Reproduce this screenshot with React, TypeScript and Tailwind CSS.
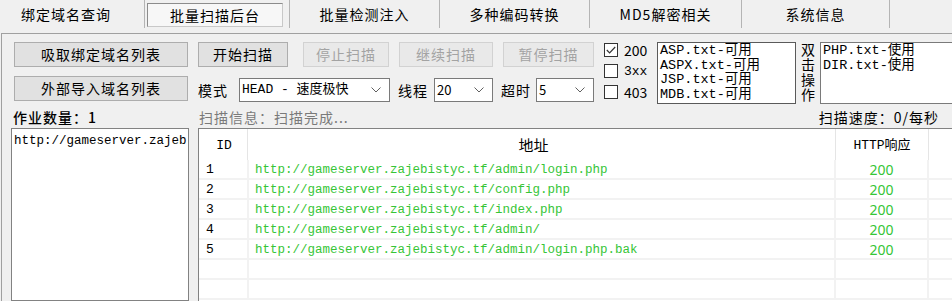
import React from "react";

const SANS = "font-['Noto_Sans_CJK_SC','Noto_Sans',sans-serif]";
const MONO = "font-['Liberation_Mono','Noto_Sans_CJK_SC',monospace]";

function Btn({ children, w, disabled }: { children: React.ReactNode; w: string; disabled?: boolean }) {
  return (
    <div
      className={
        "h-[25px] shrink-0 flex items-center justify-center border text-[14px] tracking-[1px] " +
        w +
        (disabled
          ? " border-[#d2d2d2] bg-[#e9e9e9] text-[#a3a3a3]"
          : " border-[#adadad] bg-[#e1e1e1] text-black")
      }
    >
      {children}
    </div>
  );
}

function Chevron() {
  return (
    <svg width="10" height="6" viewBox="0 0 10 6" className="shrink-0">
      <polyline points="0.5,0.5 5,5 9.5,0.5" fill="none" stroke="#606060" strokeWidth="1" />
    </svg>
  );
}

function Combo({ children, w }: { children: React.ReactNode; w: string }) {
  return (
    <div className={"h-[24px] shrink-0 bg-white border border-[#7a7a7a] flex items-center justify-between pl-[2px] pr-[8px] " + w}>
      {children}
      <Chevron />
    </div>
  );
}

function Check({ checked, label, mono }: { checked?: boolean; label: string; mono?: boolean }) {
  return (
    <div className="h-[14px] flex items-center gap-[6px]">
      <div className="w-[14px] h-[14px] border border-[#333333] bg-white flex items-center justify-center shrink-0">
        {checked && (
          <svg width="10" height="8" viewBox="0 0 10 8">
            <polyline points="0.8,4 3.6,6.8 9.2,1" fill="none" stroke="#333" strokeWidth="1.2" />
          </svg>
        )}
      </div>
      <span className={(mono ? MONO + " text-[13px]" : SANS + " text-[14px]") + " leading-none"}>{label}</span>
    </div>
  );
}

const rows = [
  { id: "1", url: "http://gameserver.zajebistyc.tf/admin/login.php", code: "200" },
  { id: "2", url: "http://gameserver.zajebistyc.tf/config.php", code: "200" },
  { id: "3", url: "http://gameserver.zajebistyc.tf/index.php", code: "200" },
  { id: "4", url: "http://gameserver.zajebistyc.tf/admin/", code: "200" },
  { id: "5", url: "http://gameserver.zajebistyc.tf/admin/login.php.bak", code: "200" },
  { id: "", url: "", code: "" },
  { id: "", url: "", code: "" },
];

const tabs = [
  { t: "绑定域名查询", w: "w-[145px] pr-[12px]" },
  { t: "批量扫描后台", w: "w-[145px]", sel: true },
  { t: "批量检测注入", w: "w-[150px]" },
  { t: "多种编码转换", w: "w-[150px]" },
  { t: "MD5解密相关", w: "w-[152px]" },
  { t: "系统信息", w: "w-[148px]" },
];

export default function App() {
  return (
    <div className={"w-[952px] h-[301px] bg-[#f0f0f0] overflow-hidden flex flex-col text-black " + SANS}>
      {/* Tab bar */}
      <div className="h-[33px] flex shrink-0">
        {tabs.map((tab) => (
          <div key={tab.t} className={"h-[28px] shrink-0 flex items-center justify-center border-r border-[#b4b4b4] " + tab.w}>
            {tab.sel ? (
              <div className="mt-[2px] ml-[1px] mr-[5px] w-[136px] h-[24px] border border-[#8c8c8c] border-b-[#c8c8c8] border-r-[#c8c8c8] bg-[#f7f7f7] flex items-center justify-center text-[14px] tracking-[1px]">
                {tab.t}
              </div>
            ) : (
              <span className="text-[14px] tracking-[1px]">{tab.t}</span>
            )}
          </div>
        ))}
      </div>

      {/* Panel */}
      <div className="flex-1 flex flex-col ml-[1px] border-t border-l border-[#a0a0a0] min-h-0">
        {/* Band 1 */}
        <div className="h-[70px] shrink-0 flex pt-[8px] pl-[9px]">
          <div className="w-[178px] shrink-0 pl-[3px] flex flex-col">
            <Btn w="w-[174px]">吸取绑定域名列表</Btn>
            <div className="h-[9px]" />
            <Btn w="w-[174px]">外部导入域名列表</Btn>
          </div>
          <div className="ml-[9px] flex items-start shrink-0">
            <div className="w-[396px] shrink-0 flex flex-col">
              <div className="flex">
                <Btn w="w-[90px]">开始扫描</Btn>
                <div className="w-[15px] shrink-0" />
                <Btn w="w-[86px]" disabled>停止扫描</Btn>
                <div className="w-[10px] shrink-0" />
                <Btn w="w-[94px]" disabled>继续扫描</Btn>
                <div className="w-[10px] shrink-0" />
                <Btn w="w-[91px]" disabled>暂停扫描</Btn>
              </div>
              <div className="flex items-center mt-[11px] text-[14px] tracking-[1px]">
                <div className="w-[41px] shrink-0">模式</div>
                <Combo w="w-[151px]">
                  <span className={MONO + " text-[13px] tracking-normal whitespace-pre"}>HEAD - 速度极快</span>
                </Combo>
                <div className="w-[44px] shrink-0 pl-[8px]">线程</div>
                <Combo w="w-[59px]">
                  <span className="text-[13px] tracking-normal">20</span>
                </Combo>
                <div className="w-[43px] shrink-0 pl-[8px]">超时</div>
                <Combo w="w-[58px]">
                  <span className="text-[13px] tracking-normal">5</span>
                </Combo>
              </div>
            </div>
            <div className="w-[53px] ml-[10px] shrink-0 flex flex-col gap-[7px] pt-[1px]">
              <Check checked label="200" />
              <Check label="3xx" mono />
              <Check label="403" />
            </div>
            <div className={"w-[139px] h-[62px] shrink-0 bg-white border border-[#5a5a5a] pl-[2px] pt-[1px] overflow-hidden text-[13.5px] leading-[14.5px] " + MONO}>
              <div>ASP.txt-可用</div>
              <div>ASPX.txt-可用</div>
              <div>JSP.txt-可用</div>
              <div>MDB.txt-可用</div>
            </div>
            <div className="w-[24px] h-[62px] shrink-0 flex justify-center pt-[1px]">
              <span className="[writing-mode:vertical-rl] text-[14px] leading-[16px] tracking-[1px]">双击操作</span>
            </div>
            <div className={"w-[140px] h-[62px] shrink-0 bg-white border border-[#7a7a7a] pl-[2px] pt-[1px] overflow-hidden text-[13.5px] leading-[14.5px] " + MONO}>
              <div>PHP.txt-使用</div>
              <div>DIR.txt-使用</div>
            </div>
          </div>
        </div>

        {/* Band 2 */}
        <div className="h-[24px] shrink-0 flex items-center pl-[11px] pt-[2px] text-[14px] tracking-[1px]">
          <div className="w-[177px] shrink-0 font-medium">作业数量：1</div>
          <div className="ml-[9px] text-[#7a7a7a]">扫描信息：扫描完成...</div>
          <div className="ml-auto mr-[13px]">扫描速度：0/每秒</div>
        </div>

        {/* Band 3 */}
        <div className="flex-1 flex pl-[9px] min-h-0">
          <div className="w-[178px] shrink-0 bg-white border border-[#828282] overflow-hidden pl-[2px] pt-[3px]">
            <div className={MONO + " text-[12.5px] whitespace-nowrap"}>http://gameserver.zajeb</div>
          </div>
          <div className="ml-[9px] flex-1 bg-white border-t border-l border-[#828282] flex flex-col min-w-0">
            <div className="h-[31px] flex shrink-0">
              <div className={"w-[49px] shrink-0 border-r border-[#e5e5e5] flex items-center justify-center pl-[2px] pt-[2px] text-[13px] " + MONO}>ID</div>
              <div className="w-[588px] shrink-0 border-r border-[#e5e5e5] flex items-center justify-center pr-[16px] pt-[2px] text-[15px]">地址</div>
              <div className={"w-[93px] shrink-0 border-r border-[#e5e5e5] flex items-center justify-center pt-[2px] text-[13px] " + MONO}>HTTP响应</div>
              <div className="flex-1" />
            </div>
            {rows.map((r, i) => (
              <div key={i} className="h-[20px] flex shrink-0 border-b-2 border-[#f2f2f2]">
                <div className={"w-[50px] shrink-0 border-r-2 border-[#f2f2f2] flex items-center pl-[7px] pt-[2px] text-[13px] " + MONO}>{r.id}</div>
                <div className={"w-[587px] shrink-0 border-r-2 border-[#f2f2f2] flex items-center pl-[6px] pt-[2px] text-[12.5px] text-[#36c536] whitespace-nowrap " + MONO}>{r.url}</div>
                <div className="w-[93px] shrink-0 border-r-2 border-[#f2f2f2] flex items-center justify-center pt-[1px] text-[14px] text-[#36c536] font-['Noto_Sans',sans-serif]">{r.code}</div>
                <div className="flex-1" />
              </div>
            ))}
          </div>
        </div>
      </div>
    </div>
  );
}
